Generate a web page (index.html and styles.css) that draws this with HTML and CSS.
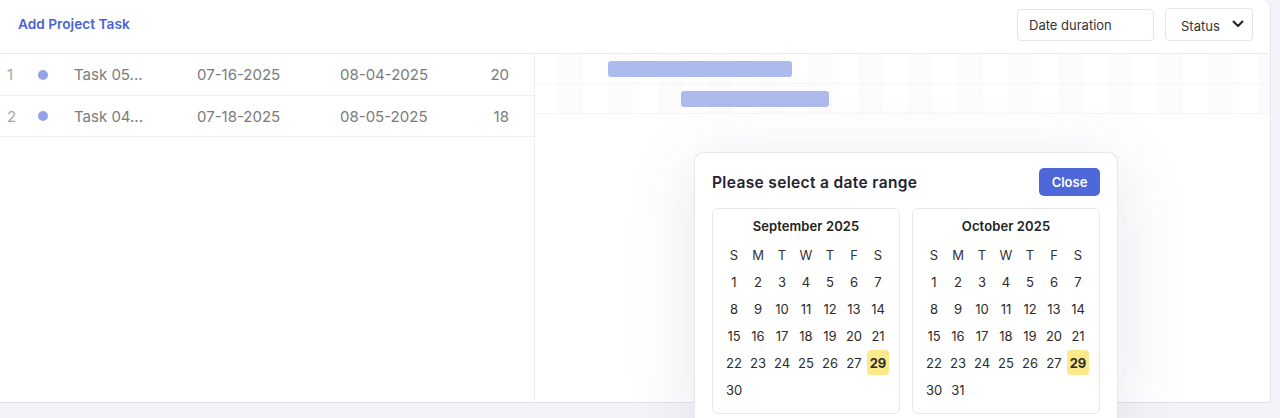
FILE: index.html
```html
<!DOCTYPE html>
<html lang="en">
<head>
  <meta charset="UTF-8">
  <title>Project Tasks</title>
  <link rel="stylesheet" href="styles.css">
</head>
<body>

  <div class="card">
    <div class="card-header">
      <a class="add-task" href="#">Add Project Task</a>
      <div class="filters">
        <div class="date-input">Date duration</div>
        <div class="status-select">
          <span>Status</span>
          <svg width="12" height="8" viewBox="0 0 12 8"><path d="M1.5 1.5 6 6l4.5-4.5" fill="none" stroke="#222" stroke-width="2" stroke-linecap="round" stroke-linejoin="round"/></svg>
        </div>
      </div>
    </div>

    <div class="card-body">
      <div class="task-table">
        <div class="task-row">
          <span class="num">1</span>
          <span class="dot"></span>
          <span class="name">Task 05...</span>
          <span class="start">07-16-2025</span>
          <span class="end">08-04-2025</span>
          <span class="days">20</span>
        </div>
        <div class="task-row">
          <span class="num">2</span>
          <span class="dot"></span>
          <span class="name">Task 04...</span>
          <span class="start">07-18-2025</span>
          <span class="end">08-05-2025</span>
          <span class="days">18</span>
        </div>
      </div>

      <div class="gantt">
        <div class="gantt-row"><div class="bar" style="left:73px;width:184px"></div></div>
        <div class="gantt-row"><div class="bar" style="left:146px;width:148px"></div></div>
      </div>
    </div>
  </div>

  <div class="range-picker">
    <div class="picker-head">
      <h3>Please select a date range</h3>
      <button class="close-btn">Close</button>
    </div>
    <div class="months">
      <div class="month">
        <div class="month-title">September 2025</div>
        <div class="days-grid">
          <span class="wd">S</span><span class="wd">M</span><span class="wd">T</span><span class="wd">W</span><span class="wd">T</span><span class="wd">F</span><span class="wd">S</span>
          <span>1</span><span>2</span><span>3</span><span>4</span><span>5</span><span>6</span><span>7</span>
          <span>8</span><span>9</span><span>10</span><span>11</span><span>12</span><span>13</span><span>14</span>
          <span>15</span><span>16</span><span>17</span><span>18</span><span>19</span><span>20</span><span>21</span>
          <span>22</span><span>23</span><span>24</span><span>25</span><span>26</span><span>27</span><span class="today">29</span>
          <span>30</span>
        </div>
      </div>
      <div class="month">
        <div class="month-title">October 2025</div>
        <div class="days-grid">
          <span class="wd">S</span><span class="wd">M</span><span class="wd">T</span><span class="wd">W</span><span class="wd">T</span><span class="wd">F</span><span class="wd">S</span>
          <span>1</span><span>2</span><span>3</span><span>4</span><span>5</span><span>6</span><span>7</span>
          <span>8</span><span>9</span><span>10</span><span>11</span><span>12</span><span>13</span><span>14</span>
          <span>15</span><span>16</span><span>17</span><span>18</span><span>19</span><span>20</span><span>21</span>
          <span>22</span><span>23</span><span>24</span><span>25</span><span>26</span><span>27</span><span class="today">29</span>
          <span>30</span><span>31</span>
        </div>
      </div>
    </div>
  </div>

</body>
</html>
```

FILE: styles.css
```css
body {
  margin: 0;
  background: #f3f4f8;
  font-family: Inter, "Liberation Sans", sans-serif;
  height: 418px;
  overflow: hidden;
  position: relative;
}
.card {
  width: 1271px;
  height: 403px;
  background: #fff;
  border-right: 1px solid #e4e6ec;
  border-bottom: 1px solid #e0e3ea;
  border-radius: 0 8px 0 0;
  box-sizing: border-box;
  display: flex;
  flex-direction: column;
}
.card-header {
  height: 54px;
  border-bottom: 1px solid #e6e8ee;
  box-sizing: border-box;
  display: flex;
  justify-content: space-between;
  align-items: center;
  padding: 0 17px 0 18px;
}
.add-task {
  color: #4a63d6;
  font-size: 13.7px;
  font-weight: 600;
  text-decoration: none;
  margin-top: -6px;
}
.filters {
  display: flex;
  gap: 11px;
  align-items: center;
  margin-top: -4px;
}
.date-input {
  width: 137px;
  height: 32px;
  box-sizing: border-box;
  border: 1px solid #e3e5ea;
  border-radius: 4px;
  padding: 0 11px;
  font-size: 13px;
  line-height: 30px;
  color: #333;
}
.status-select {
  width: 88px;
  height: 33px;
  box-sizing: border-box;
  border: 1px solid #e3e5ea;
  border-radius: 4px;
  padding: 2px 8px 0 15px;
  font-size: 13px;
  color: #333;
  display: flex;
  align-items: center;
  justify-content: space-between;
}
.status-select svg {
  margin-top: -3px;
}
.card-body {
  flex: 1;
  display: flex;
}
.task-table {
  width: 535px;
  border-right: 1px solid #eceef2;
  box-sizing: border-box;
}
.task-row {
  height: 41px;
  border-bottom: 1px solid #eff0f3;
  display: flex;
  align-items: center;
  font-size: 15px;
  color: #7b7b7b;
}
.task-row:last-child {
  height: 40px;
}
.num {
  width: 38px;
  padding-left: 7px;
  box-sizing: border-box;
  color: #a5a5a5;
}
.dot {
  width: 10px;
  height: 10px;
  border-radius: 50%;
  background: #93a3e6;
  margin-right: 26px;
}
.name {
  width: 123px;
}
.start {
  width: 143px;
}
.end {
  width: 138px;
}
.days {
  width: 31px;
  text-align: right;
}
.gantt {
  flex: 1;
}
.gantt-row {
  position: relative;
  height: 30px;
  border-bottom: 1px solid #f4f5f7;
  box-sizing: border-box;
  background: repeating-linear-gradient(90deg, transparent 0 23px, #fcfcfc 23px 48px, transparent 48px 50px);
}
.bar {
  position: absolute;
  top: 7px;
  height: 16px;
  border-radius: 3px;
  background: #adbbec;
}
.range-picker {
  position: absolute;
  left: 694px;
  top: 152px;
  width: 424px;
  height: 266px;
  overflow: hidden;
  box-sizing: border-box;
  background: #fff;
  border: 1px solid #e5e7eb;
  border-bottom: none;
  border-radius: 10px 10px 0 0;
  box-shadow: 0 12px 70px rgba(60, 70, 120, 0.13);
  padding: 15px 17px 0 17px;
}
.picker-head {
  display: flex;
  justify-content: space-between;
  align-items: center;
  margin-bottom: 12px;
}
.picker-head h3 {
  margin: 0;
  font-size: 15.5px;
  font-weight: 600;
  color: #1f2330;
  letter-spacing: 0.35px;
}
.close-btn {
  background: #4e67d9;
  color: #fff;
  border: none;
  border-radius: 5px;
  width: 61px;
  height: 28px;
  font-family: inherit;
  font-size: 13px;
  font-weight: 600;
}
.months {
  display: flex;
  gap: 12px;
}
.month {
  width: 188px;
  height: 206px;
  box-sizing: border-box;
  border: 1px solid #e5e7eb;
  border-radius: 6px;
  padding: 9px 9px 0 9px;
}
.month-title {
  text-align: center;
  font-size: 13px;
  font-weight: 600;
  color: #222;
  letter-spacing: 0.1px;
  margin-bottom: 7px;
}
.days-grid {
  display: grid;
  grid-template-columns: repeat(7, 24px);
  grid-auto-rows: 27px;
  font-size: 13px;
  color: #2b2b2b;
}
.days-grid span {
  display: flex;
  align-items: center;
  justify-content: center;
}
.days-grid .wd {
  color: #333;
}
.days-grid .today {
  background: #fbe98a;
  border-radius: 4px;
  font-weight: 700;
  margin: 1px 0;
  width: 22px;
  justify-self: center;
}
```
